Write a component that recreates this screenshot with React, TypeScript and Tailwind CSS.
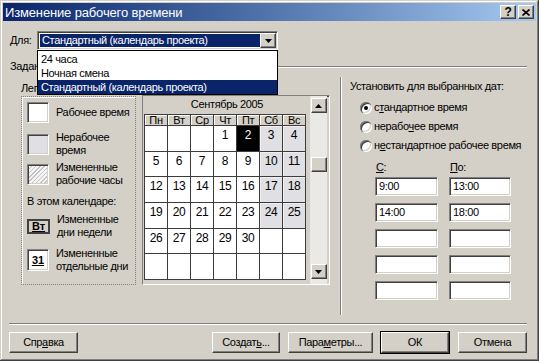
import type { ReactNode } from "react";

const RAISED =
  "border border-t-white border-l-white border-r-[#404040] border-b-[#404040] shadow-[inset_-1px_-1px_#808080]";
const SUNKEN =
  "border border-t-[#808080] border-l-[#808080] border-r-white border-b-white shadow-[inset_1px_1px_#404040,inset_-1px_-1px_#d4d0c8]";

const DAYS = ["Пн", "Вт", "Ср", "Чт", "Пт", "Сб", "Вс"];

// сентябрь 2005, начинается с четверга
const CELLS: (number | null)[] = [
  null, null, null, 1, 2, 3, 4,
  5, 6, 7, 8, 9, 10, 11,
  12, 13, 14, 15, 16, 17, 18,
  19, 20, 21, 22, 23, 24, 25,
  26, 27, 28, 29, 30, null, null,
  null, null, null, null, null, null, null,
];

function Arrow({ up }: { up?: boolean }) {
  return (
    <svg width="7" height="4" viewBox="0 0 7 4">
      <path d={up ? "M3.5 0L7 4H0Z" : "M0 0H7L3.5 4Z"} fill="#000" />
    </svg>
  );
}

function Button({
  children,
  w,
  isDefault,
}: {
  children: ReactNode;
  w: string;
  isDefault?: boolean;
}) {
  return (
    <div
      className={`${w} h-[21px] ${
        isDefault ? "outline outline-1 outline-black" : ""
      }`}
    >
      <div
        className={`flex h-full w-full items-center justify-center ${RAISED}`}
      >
        {children}
      </div>
    </div>
  );
}

function Radio({ checked, children }: { checked?: boolean; children: ReactNode }) {
  return (
    <div className="flex h-[19px] items-center">
      <div className="ml-[10px] flex h-[12px] w-[12px] items-center justify-center rounded-full bg-white shadow-[inset_1px_1px_#808080,inset_2px_2px_#404040,inset_-1px_-1px_#ffffff,inset_-2px_-2px_#d4d0c8]">
        {checked && <div className="h-[4px] w-[4px] rounded-full bg-black" />}
      </div>
      <span className="ml-[2px]">{children}</span>
    </div>
  );
}

function LegendItem({ box, lines }: { box: ReactNode; lines: string[] }) {
  return (
    <div className="flex items-center">
      {box}
      <div className="ml-[7px] leading-[13px]">
        {lines.map((l) => (
          <div key={l} className="whitespace-nowrap">
            {l}
          </div>
        ))}
      </div>
    </div>
  );
}

function Calendar() {
  return (
    <div className={`ml-[6px] flex h-[190px] w-[188px] ${SUNKEN}`}>
      <div className="flex w-[167px] flex-col bg-[#d4d0c8] pl-[1px]">
        <div className="flex h-[16px] items-center justify-center pt-[1px]">
          Сентябрь 2005
        </div>
        <div className="mt-[2px] grid h-[166px] w-[162px] grid-cols-[repeat(7,22px)] grid-rows-[10px_repeat(6,1fr)] gap-px bg-[#3c3c3c] p-px">
          {DAYS.map((d) => (
            <div
              key={d}
              className="flex items-center justify-center bg-[#d4d0c8] leading-none shadow-[inset_1px_1px_#ffffff]"
            >
              {d}
            </div>
          ))}
          {CELLS.map((n, i) => {
            const col = i % 7;
            const weekend = n !== null && col >= 5;
            const sel = n === 2;
            return (
              <div
                key={i}
                className={`flex justify-center pt-[3px] text-[12px] leading-[13px] ${
                  sel
                    ? "bg-black text-white"
                    : weekend
                      ? "bg-[#e0dfe3] shadow-[inset_1px_1px_#f0f0f0]"
                      : "bg-white"
                }`}
              >
                {n}
              </div>
            );
          })}
        </div>
      </div>
      <div className="flex w-[17px] flex-col items-center bg-[#ebe9e5] pt-[2px]">
        <div className={`flex h-[15px] w-[16px] items-center justify-center bg-[#d4d0c8] ${RAISED}`}>
          <Arrow up />
        </div>
        <div className={`mt-[44px] h-[15px] w-[16px] bg-[#d4d0c8] ${RAISED}`} />
        <div className={`mt-[92px] flex h-[15px] w-[16px] items-center justify-center bg-[#d4d0c8] ${RAISED}`}>
          <Arrow />
        </div>
      </div>
    </div>
  );
}

export default function App() {
  return (
    <div className="flex h-[361px] w-[539px] flex-col overflow-hidden bg-[#d4d0c8] font-['Liberation_Sans',Arial,sans-serif] text-[11px] leading-[13px] tracking-[-0.35px] text-black shadow-[inset_-1px_-1px_#404040,inset_1px_1px_#d4d0c8,inset_-2px_-2px_#808080,inset_2px_2px_#ffffff]">
      {/* заголовок окна */}
      <div className="mx-[3px] mt-[3px] flex h-[18px] items-center justify-between bg-linear-to-r from-[#0a246a] to-[#a6caf0] pl-[2px] pr-[2px]">
        <span className="text-[13px] leading-none tracking-[-0.15px] text-white">
          Изменение рабочего времени
        </span>
        <div className="flex gap-[2px]">
          <div className={`flex h-[14px] w-[16px] items-center justify-center bg-[#d4d0c8] text-[12px] font-bold leading-none ${RAISED}`}>
            ?
          </div>
          <div className={`flex h-[14px] w-[16px] items-center justify-center bg-[#d4d0c8] ${RAISED}`}>
            <svg width="8" height="7" viewBox="0 0 8 7">
              <path d="M0.5 0.5L7.5 6.5M7.5 0.5L0.5 6.5" stroke="#000" strokeWidth="1.6" />
            </svg>
          </div>
        </div>
      </div>

      {/* Для: */}
      <div className="mt-[10px] flex h-[19px] items-center">
        <span className="ml-[10px] w-[27px]">Для:</span>
        <div className={`relative flex h-[19px] w-[241px] items-center bg-white pl-[2px] pr-[1px] ${SUNKEN}`}>
          <div className="h-[13px] flex-1 bg-[#0a246a] px-[2px] text-white">
            Стандартный (календарь проекта)
          </div>
          <div className={`flex h-[15px] w-[16px] items-center justify-center bg-[#d4d0c8] ${RAISED}`}>
            <Arrow />
          </div>
          <div className="absolute left-[-1px] top-[18px] z-10 h-[45px] w-[241px] border border-black bg-white pt-px">
            <div className="h-[14px] pl-[3px] leading-[14px]">24 часа</div>
            <div className="h-[14px] pl-[3px] leading-[14px]">Ночная смена</div>
            <div className="h-[14px] bg-[#0a246a] pl-[3px] leading-[14px] text-white">
              Стандартный (календарь проекта)
            </div>
          </div>
        </div>
      </div>

      {/* Задание рабочего времени */}
      <div className="mt-[10px] flex h-[13px] items-center">
        <span className="ml-[10px] whitespace-nowrap">
          Задание рабочего времени для выбранных дат:
        </span>
        <div className="ml-[4px] mr-[12px] h-[2px] flex-1 border-t border-b border-t-[#808080] border-b-white" />
      </div>

      {/* основная часть */}
      <div className="mt-[4px] flex h-[238px]">
        <div className="ml-[21px] flex w-[310px] flex-col">
          <span className="mt-[5px] h-[13px]">Легенда:</span>
          <div className="flex">
            <div className="mt-[1px] flex h-[189px] w-[115px] flex-col border border-dotted border-[#808080] pl-[5px] pt-[5px] shadow-[inset_1px_1px_#ffffff]">
              <LegendItem
                box={<div className={`h-[21px] w-[22px] bg-white ${SUNKEN}`} />}
                lines={["Рабочее время"]}
              />
              <div className="mt-[8px]">
                <LegendItem
                  box={<div className={`h-[21px] w-[22px] bg-[#e0dfe3] ${SUNKEN}`} />}
                  lines={["Нерабочее", "время"]}
                />
              </div>
              <div className="mt-[4px]">
                <LegendItem
                  box={
                    <div
                      className={`h-[21px] w-[22px] bg-[repeating-linear-gradient(135deg,#c4c4c4_0px,#c4c4c4_1px,#f4f4f4_1px,#f4f4f4_3px)] ${SUNKEN}`}
                    />
                  }
                  lines={["Измененные", "рабочие часы"]}
                />
              </div>
              <span className="mt-[8px] h-[13px] whitespace-nowrap">В этом календаре:</span>
              <div className="mt-[5px]">
                <LegendItem
                  box={
                    <div className="flex h-[15px] w-[23px] items-center justify-center border-2 border-[#404040] bg-[#d4d0c8] font-bold tracking-normal">
                      <u>Вт</u>
                    </div>
                  }
                  lines={["Измененные", "дни недели"]}
                />
              </div>
              <div className="mt-[8px]">
                <LegendItem
                  box={
                    <div className={`flex h-[22px] w-[22px] items-center justify-center bg-white font-bold tracking-normal ${SUNKEN}`}>
                      <u>31</u>
                    </div>
                  }
                  lines={["Измененные", "отдельные дни"]}
                />
              </div>
            </div>
            <Calendar />
          </div>
        </div>

        <div className="ml-[9px] h-full w-[2px] border-l border-r border-l-[#808080] border-r-white" />

        <div className="ml-[8px] flex flex-col">
          <span className="mt-[3px] h-[13px]">Установить для выбранных дат:</span>
          <div className="mt-[5px] flex flex-col">
            <Radio checked>
              с<u>т</u>андартное время
            </Radio>
            <Radio>
              нерабо<u>ч</u>ее время
            </Radio>
            <Radio>
              н<u>е</u>стандартное рабочее время
            </Radio>
          </div>
          <div className="mt-[6px] flex h-[13px]">
            <span className="ml-[26px] w-[74px]">
              <u>С</u>:
            </span>
            <span>
              <u>П</u>о:
            </span>
          </div>
          <div className="ml-[25px] mt-[3px] grid grid-cols-[63px_62px] gap-x-[11px] gap-y-[7px]">
            {["9:00", "13:00", "14:00", "18:00", "", "", "", "", "", ""].map((v, i) => (
              <div key={i} className={`flex h-[19px] items-center bg-white pl-[3px] ${SUNKEN}`}>
                {v}
              </div>
            ))}
          </div>
        </div>
      </div>

      {/* нижняя линия и кнопки */}
      <div className="ml-[9px] mr-[12px] mt-[8px] h-[2px] border-t border-b border-t-[#808080] border-b-white" />
      <div className="mt-[7px] flex">
        <div className="ml-[9px]">
          <Button w="w-[69px]">
            Спр<u>а</u>вка
          </Button>
        </div>
        <div className="ml-[134px]">
          <Button w="w-[68px]">
            Создат<u>ь</u>...
          </Button>
        </div>
        <div className="ml-[8px]">
          <Button w="w-[85px]">
            Пара<u>м</u>етры...
          </Button>
        </div>
        <div className="ml-[8px]">
          <Button w="w-[68px]" isDefault>
            ОК
          </Button>
        </div>
        <div className="ml-[9px]">
          <Button w="w-[69px]">Отмена</Button>
        </div>
      </div>
    </div>
  );
}
